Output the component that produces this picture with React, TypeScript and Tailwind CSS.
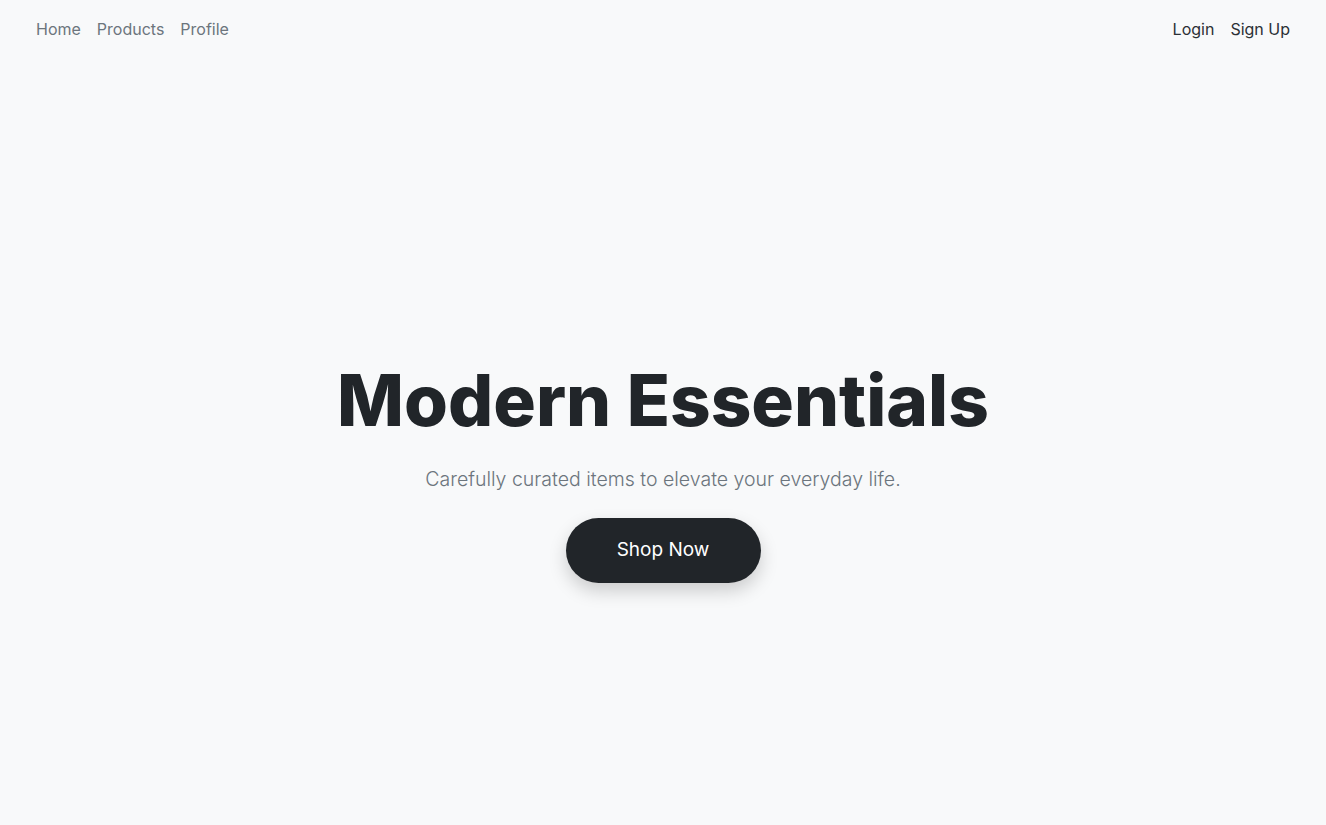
const App = () => {
  return (
    <div
      className="min-h-screen flex flex-col bg-[#f8f9fa]"
      style={{ fontFamily: 'Inter, "Noto Sans", sans-serif' }}
    >
      {/* Top nav */}
      <nav className="flex items-center justify-between px-9 h-[57px] text-base">
        <ul className="flex items-center gap-4 text-[#6c757d]">
          <li>Home</li>
          <li>Products</li>
          <li>Profile</li>
        </ul>
        <ul className="flex items-center gap-4 text-[#2b3035]">
          <li>Login</li>
          <li>Sign Up</li>
        </ul>
      </nav>

      {/* Hero */}
      <main className="flex-1 flex flex-col items-center justify-center pt-[66px]">
        <h1 className="text-[71px] leading-none font-extrabold text-[#212529]">
          Modern Essentials
        </h1>
        <p className="mt-[29px] text-[19.5px] leading-[28px] font-light text-[#6c757d]">
          Carefully curated items to elevate your everyday life.
        </p>
        <button className="mt-[25px] w-[195px] h-[65px] rounded-full bg-[#212529] text-white text-[19px] shadow-[0_8px_18px_rgba(0,0,0,0.18)]">
          Shop Now
        </button>
      </main>
    </div>
  );
};

export default App;
